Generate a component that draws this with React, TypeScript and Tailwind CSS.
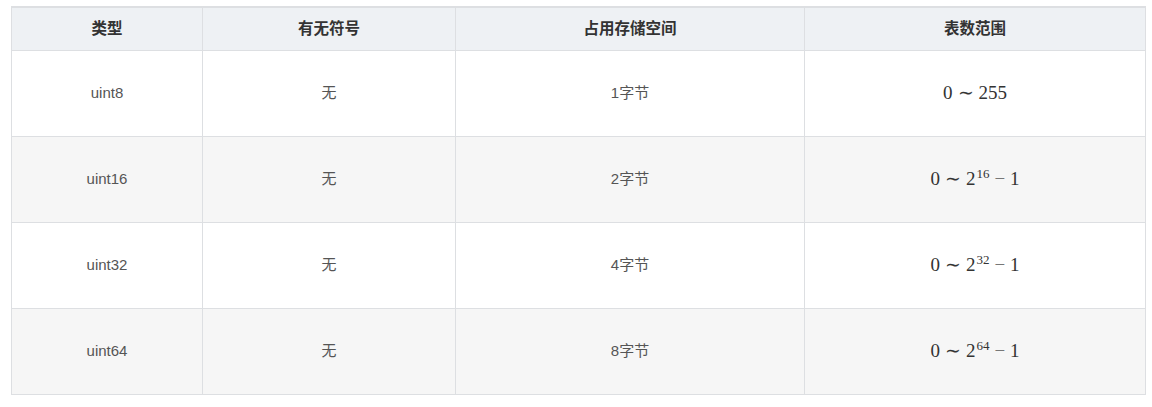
import React from 'react';

const widths = ['w-[191px]', 'w-[253px]', 'w-[349px]', 'w-[341px]'];

const rows = [
  { type: 'uint8', sign: '无', size: '1字节', exp: null as string | null },
  { type: 'uint16', sign: '无', size: '2字节', exp: '16' },
  { type: 'uint32', sign: '无', size: '4字节', exp: '32' },
  { type: 'uint64', sign: '无', size: '8字节', exp: '64' },
];

function Range({ exp }: { exp: string | null }) {
  return (
    <span className="font-['Liberation_Serif',serif] text-[19px] text-[#333]">
      0<span className="mx-[5px]">∼</span>
      {exp === null ? (
        '255'
      ) : (
        <>
          2<span className="text-[13px] relative -top-[7px] ml-[1px]">{exp}</span>
          <span className="mx-[5px] text-[#777]">−</span>1
        </>
      )}
    </span>
  );
}

export default function App() {
  const cell = 'flex items-center justify-center border-r border-b border-[#dddfe2]';
  return (
    <div className="bg-white min-h-[407px] pt-[6px] pl-[11px] font-['Liberation_Sans','Noto_Sans_CJK_SC',sans-serif] text-[15px]">
      <div className="w-[1135px] border-t-2 border-l border-[#dddfe2]">
        <div className="flex h-[43px] bg-[#eef1f4] text-[#333] text-[15.5px] font-bold">
          {['类型', '有无符号', '占用存储空间', '表数范围'].map((h, i) => (
            <div key={h} className={`${cell} ${widths[i]}`}>{h}</div>
          ))}
        </div>
        {rows.map((r, idx) => (
          <div
            key={r.type}
            className={`flex h-[86px] text-[#555] ${idx % 2 === 1 ? 'bg-[#f6f6f6]' : 'bg-white'}`}
          >
            <div className={`${cell} ${widths[0]}`}>{r.type}</div>
            <div className={`${cell} ${widths[1]}`}>{r.sign}</div>
            <div className={`${cell} ${widths[2]}`}>{r.size}</div>
            <div className={`${cell} ${widths[3]}`}>
              <Range exp={r.exp} />
            </div>
          </div>
        ))}
      </div>
    </div>
  );
}
